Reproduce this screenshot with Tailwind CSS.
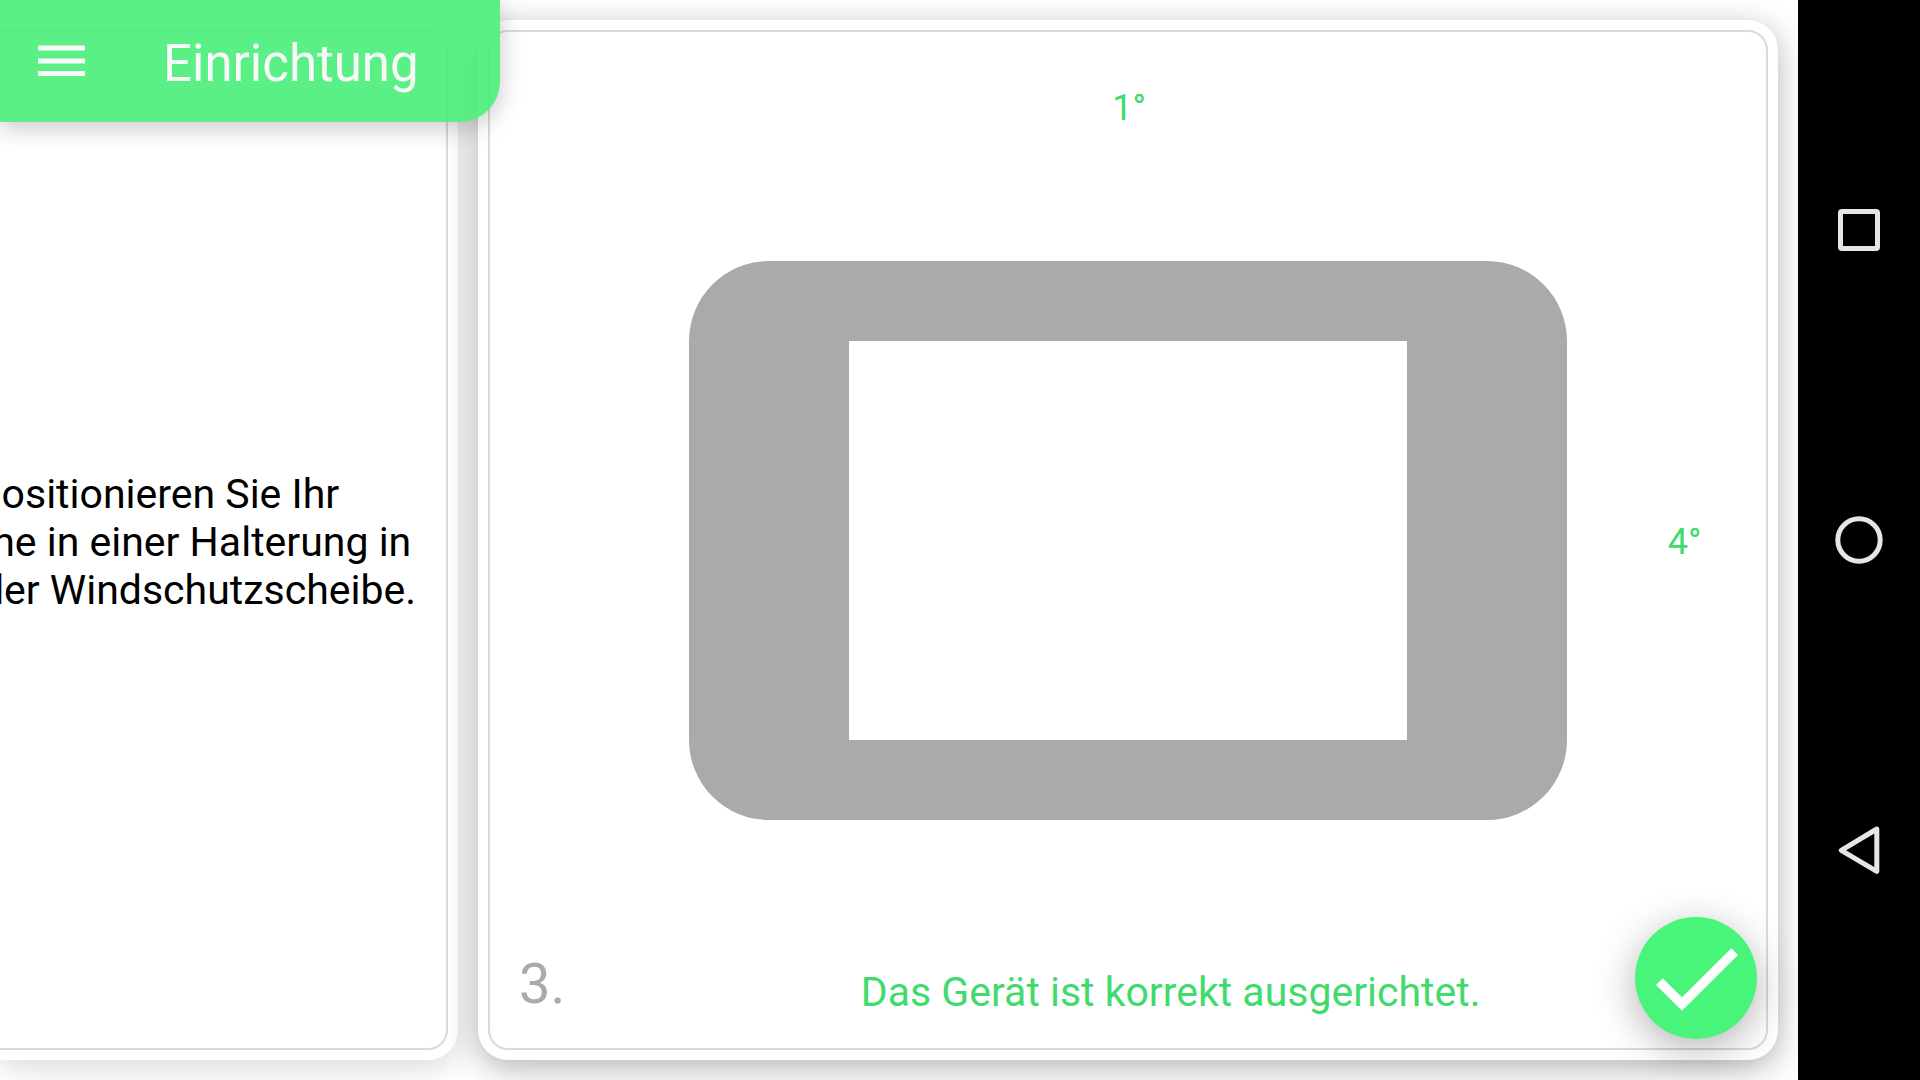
<!DOCTYPE html>
<html lang="de">
<head>
<meta charset="utf-8">
<meta name="viewport" content="width=device-width, initial-scale=1">
<title>Einrichtung</title>
<script src="https://cdn.jsdelivr.net/npm/@tailwindcss/browser@4"></script>
</head>
<body class="flex h-screen overflow-hidden bg-white font-[Roboto,sans-serif]">
  <div class="relative flex min-w-0 flex-1 overflow-hidden">
    <header class="absolute top-0 left-0 z-20 flex h-[122px] w-[500px] items-center rounded-br-[40px] bg-[#49ee79]/90 pl-[38px] text-[#f8f8f8] shadow-[0_6px_24px_rgba(0,0,0,0.22)]">
      <button type="button" aria-label="Menü" class="mr-[78px]">
        <svg class="block h-8 w-[47px]" viewBox="0 0 47 32" fill="currentColor"><path d="M0 0.500h47v5H0zM0 13.500h47v5H0zM0 26h47v5H0z"/></svg>
      </button>
      <h1 class="pt-[6px] text-[51px] leading-[60px]">Einrichtung</h1>
    </header>

    <main class="flex min-w-0 flex-1 gap-5 py-5 pr-5">
      <section class="flex w-[458px] shrink-0 rounded-r-[30px] bg-white py-[10px] pr-[10px] shadow-[0_8px_32px_rgba(0,0,0,0.15)]">
        <div class="flex min-w-0 flex-1 items-center justify-end rounded-r-[20px] border-y-2 border-r-2 border-[#dadada] pr-[30px]">
          <p class="shrink-0 pt-1 text-center text-[41px] leading-[48px] whitespace-nowrap text-black">Bitte positionieren Sie Ihr<br>Smartphone in einer Halterung in<br>der Mitte der Windschutzscheibe.</p>
        </div>
      </section>

      <section class="relative flex min-w-0 flex-1 rounded-[30px] bg-white p-[10px] shadow-[0_8px_32px_rgba(0,0,0,0.3)]">
        <div class="grid min-w-0 flex-1 grid-rows-[1fr_auto_1fr] rounded-[20px] border-2 border-[#dadada]">
          <p class="pt-[55px] pl-[2px] text-center text-[36px] leading-[42px] text-[#41da6d]">1°</p>
          <div class="grid grid-cols-[1fr_auto_1fr] items-center">
            <div class="col-start-2 rounded-[80px] bg-[#aaa] px-40 py-20">
              <div class="h-[399px] w-[558px] bg-white"></div>
            </div>
            <p class="pt-1 pl-9 text-center text-[36px] leading-[42px] text-[#41da6d]">4°</p>
          </div>
          <div class="flex items-end pb-8 pl-[29px]">
            <span class="text-[56px] leading-[64px] text-[#aaa]">3.</span>
            <p class="flex-1 pl-[10px] text-center text-[41px] leading-[48px] text-[#41da6d]">Das Gerät ist korrekt ausgerichtet.</p>
          </div>
        </div>
        <button type="button" aria-label="Bestätigen" class="absolute right-[21px] bottom-[21px] size-[122px] rounded-full bg-[#48f47a] text-white shadow-[0_10px_40px_rgba(0,0,0,0.3)]">
          <svg class="block size-full" viewBox="0 0 122 122" fill="currentColor"><path d="M21 68l6.700-6.700L47 80.300l49.300-49L103 38 47 93.700z"/></svg>
        </button>
      </section>
    </main>
  </div>

  <nav aria-label="System" class="relative z-30 flex w-[122px] shrink-0 flex-col bg-black py-[75px] text-[#e6e6e6]">
    <button type="button" aria-label="Übersicht" class="flex flex-1 items-center justify-center">
      <svg class="size-12" viewBox="0 0 48 48" fill="none" stroke="currentColor" stroke-width="5"><rect x="5.500" y="5.500" width="37" height="37" rx="1.500"/></svg>
    </button>
    <button type="button" aria-label="Startseite" class="flex flex-1 items-center justify-center">
      <svg class="size-12" viewBox="0 0 48 48" fill="none" stroke="currentColor" stroke-width="5"><circle cx="24" cy="24" r="21.200"/></svg>
    </button>
    <button type="button" aria-label="Zurück" class="flex flex-1 items-center justify-center">
      <svg class="size-12" viewBox="0 0 48 48" fill="none" stroke="currentColor" stroke-width="5" stroke-linejoin="round"><path d="M41.800 3L6.300 24.300l35.500 21z"/></svg>
    </button>
  </nav>
</body>
</html>
